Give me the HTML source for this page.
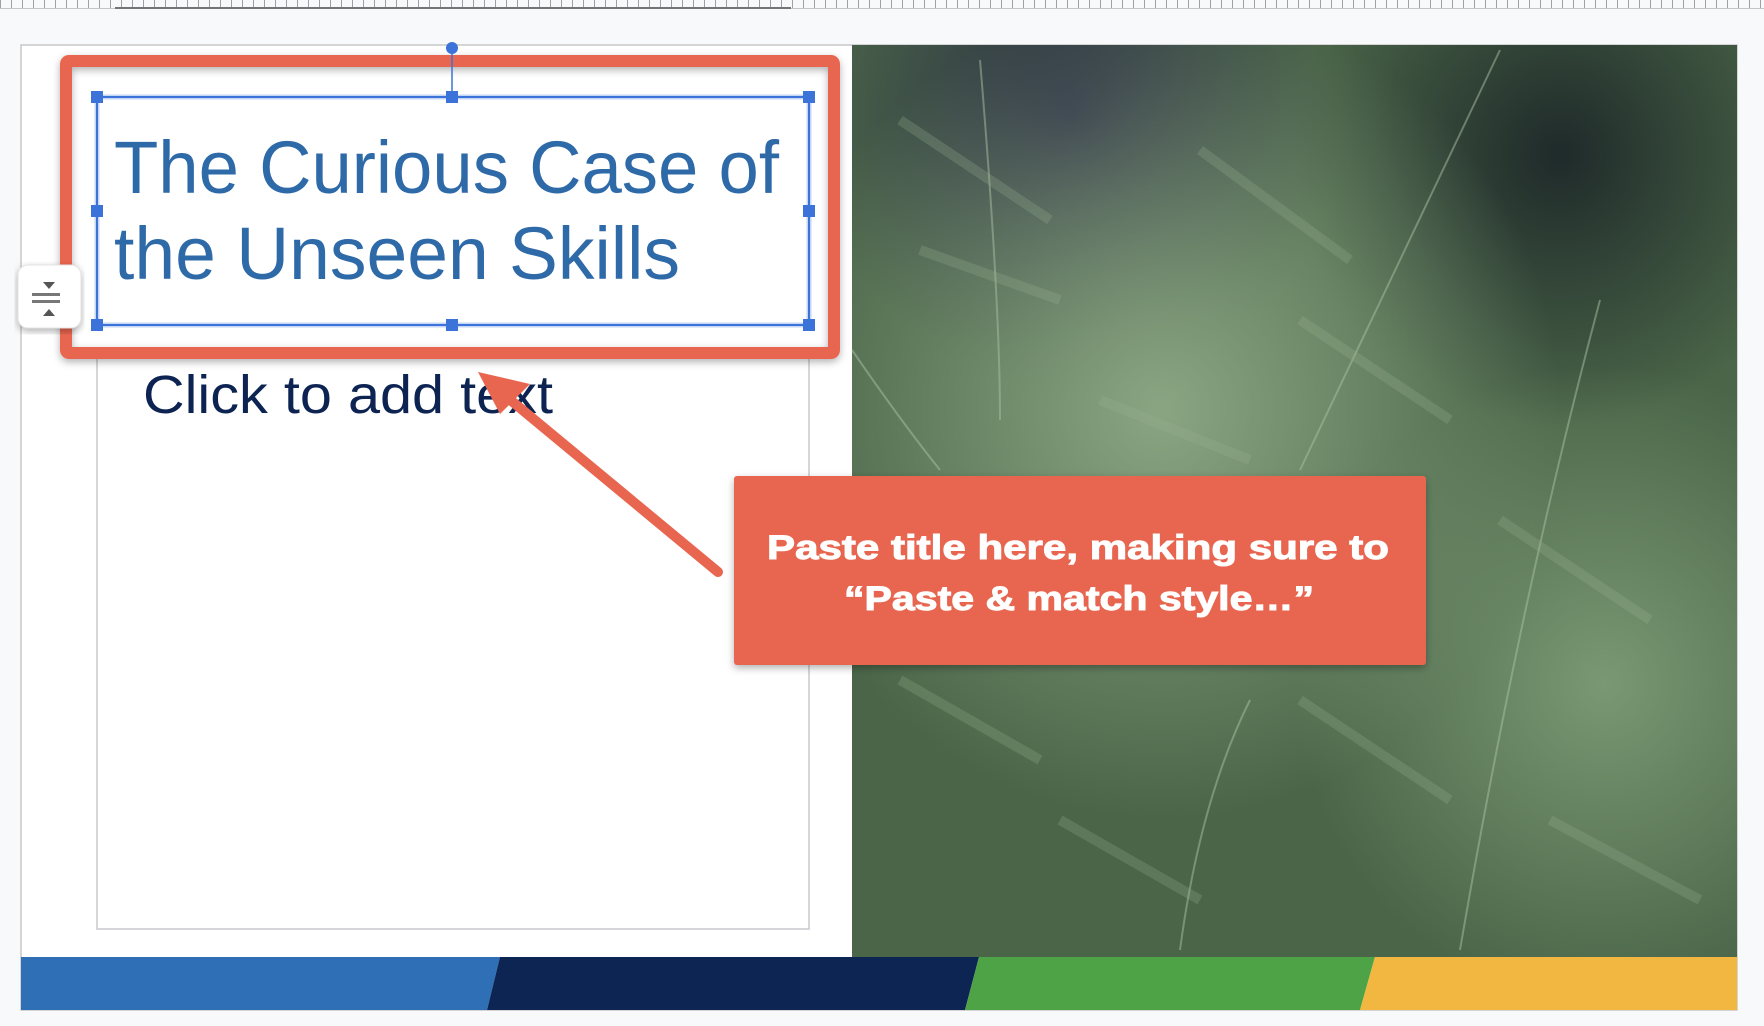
<!DOCTYPE html>
<html><head><meta charset="utf-8"><style>
html,body{margin:0;padding:0;background:#f8f9fa;}
svg{display:block}
</style></head><body>
<svg width="1764" height="1026" viewBox="0 0 1764 1026" xmlns="http://www.w3.org/2000/svg">
<defs>
<pattern id="tick" width="11" height="9" patternUnits="userSpaceOnUse"><rect x="0" y="0" width="1" height="9" fill="#9aa0a6"/></pattern>
<radialGradient id="g1" cx="0.25" cy="0.08" r="0.3"><stop offset="0" stop-color="#2b2e45"/><stop offset="1" stop-color="#2b2e45" stop-opacity="0"/></radialGradient>
<radialGradient id="g2" cx="0.8" cy="0.12" r="0.3"><stop offset="0" stop-color="#1f2a2a"/><stop offset="1" stop-color="#1f2a2a" stop-opacity="0"/></radialGradient>
<radialGradient id="g3" cx="0.35" cy="0.4" r="0.45"><stop offset="0" stop-color="#8aa582"/><stop offset="1" stop-color="#8aa582" stop-opacity="0"/></radialGradient>
<radialGradient id="g4" cx="0.85" cy="0.7" r="0.35"><stop offset="0" stop-color="#7a9873"/><stop offset="1" stop-color="#7a9873" stop-opacity="0"/></radialGradient>
<filter id="sh" x="-5%" y="-5%" width="110%" height="115%"><feDropShadow dx="0" dy="3" stdDeviation="4" flood-opacity="0.3"/></filter>
</defs>
<rect x="0" y="0" width="1764" height="9" fill="#f8f9fa"/>
<rect x="0" y="0" width="1764" height="9" fill="url(#tick)"/>
<rect x="0" y="8" width="1764" height="1" fill="#c4c7c5"/>
<rect x="115" y="7" width="676" height="2" fill="#70757a"/>
<rect x="21" y="45" width="1716" height="965" fill="#fff" stroke="#c8c8c8" stroke-width="1.5"/>
<g>
<rect x="852" y="45" width="885" height="912" fill="#4a6548"/>
<rect x="852" y="45" width="885" height="912" fill="url(#g1)"/>
<rect x="852" y="45" width="885" height="912" fill="url(#g2)"/>
<rect x="852" y="45" width="885" height="912" fill="url(#g3)"/>
<rect x="852" y="45" width="885" height="912" fill="url(#g4)"/>
<g stroke="#a9bfa3" stroke-width="2" fill="none" opacity="0.5">
<path d="M980 60 Q1000 300 1000 420"/><path d="M1500 50 Q1380 300 1300 470"/><path d="M852 350 Q900 420 940 470"/><path d="M1600 300 Q1520 600 1460 950"/><path d="M1250 700 Q1200 800 1180 950"/>
</g>
<g stroke="#9ab593" stroke-width="10" fill="none" opacity="0.25">
<path d="M900 120 L1050 220 M920 250 L1060 300 M1200 150 L1350 260 M1300 320 L1450 420 M1100 400 L1250 460 M900 680 L1040 760 M1300 700 L1450 800 M1500 520 L1650 620 M1060 820 L1200 900 M1550 820 L1700 900"/>
</g>
</g>
<polygon points="21,957 500,957 487,1010 21,1010" fill="#2f6fb6"/>
<polygon points="500,957 979,957 965,1010 487,1010" fill="#0c2552"/>
<polygon points="979,957 1375,957 1360,1010 965,1010" fill="#4ea346"/>
<polygon points="1375,957 1737,957 1737,1010 1360,1010" fill="#f2b741"/>
<rect x="97" y="358" width="712" height="571" fill="none" stroke="#c6c9cd" stroke-width="1.5"/>
<text x="143" y="413" font-family="Liberation Sans, sans-serif" font-size="54" fill="#0d2452" textLength="410" lengthAdjust="spacingAndGlyphs">Click to add text</text>
<rect x="66" y="61" width="768" height="292" rx="3" fill="none" stroke="#e8654f" stroke-width="12" filter="url(#sh)"/>
<line x1="452" y1="48" x2="452" y2="97" stroke="#3b73d9" stroke-width="1.5"/>
<circle cx="452" cy="48" r="6" fill="#3b73d9"/>
<rect x="97" y="97" width="712" height="228" fill="none" stroke="#c5d6f6" stroke-width="5"/>
<rect x="97" y="97" width="712" height="228" fill="none" stroke="#3b73d9" stroke-width="2"/>
<g fill="#3b73d9">
<rect x="91" y="91" width="12" height="12"/><rect x="446" y="91" width="12" height="12"/><rect x="803" y="91" width="12" height="12"/>
<rect x="91" y="205" width="12" height="12"/><rect x="803" y="205" width="12" height="12"/>
<rect x="91" y="319" width="12" height="12"/><rect x="446" y="319" width="12" height="12"/><rect x="803" y="319" width="12" height="12"/>
</g>
<text x="114" y="193" font-family="Liberation Sans, sans-serif" font-size="74" fill="#2e69a8" textLength="665" lengthAdjust="spacingAndGlyphs">The Curious Case of</text>
<text x="114" y="279" font-family="Liberation Sans, sans-serif" font-size="74" fill="#2e69a8" textLength="566" lengthAdjust="spacingAndGlyphs">the Unseen Skills</text>
<rect x="18" y="265" width="63" height="63" rx="10" fill="#fff" stroke="#e3e3e3" filter="url(#sh)"/>
<polygon points="43,282 55,282 49,289" fill="#555"/>
<rect x="32" y="293" width="28" height="3" fill="#777"/><rect x="32" y="300" width="28" height="3" fill="#777"/>
<polygon points="43,316 55,316 49,309" fill="#555"/>
<line x1="718" y1="572" x2="496" y2="388" stroke="#e8654f" stroke-width="10" stroke-linecap="round"/>
<polygon points="478,372 530,384 500,414" fill="#e8654f"/>
<rect x="734" y="476" width="692" height="189" rx="3" fill="#e8654f" filter="url(#sh)"/>
<text x="767" y="559" font-family="Liberation Sans, sans-serif" font-weight="bold" font-size="34" fill="#fff" textLength="622" lengthAdjust="spacingAndGlyphs" stroke="#fff" stroke-width="1">Paste title here, making sure to</text>
<text x="844" y="610" font-family="Liberation Sans, sans-serif" font-weight="bold" font-size="34" fill="#fff" textLength="470" lengthAdjust="spacingAndGlyphs" stroke="#fff" stroke-width="1">“Paste &amp; match style…”</text>
</svg>
</body></html>
